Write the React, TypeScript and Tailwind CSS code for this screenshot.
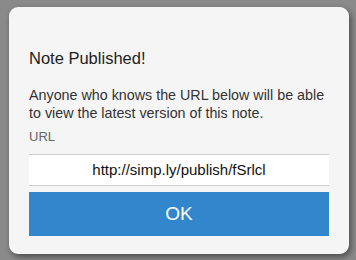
export default function App() {
  return (
    <div className="w-[356px] h-[260px] bg-[#8a8a8a] pt-[7px] pl-[9px]" style={{ fontFamily: '"Liberation Sans", Arial, sans-serif' }}>
      <div className="w-[340px] h-[247px] rounded-[9px] bg-[#f5f5f5] shadow-[2px_3px_6px_rgba(0,0,0,0.45)] pt-[39px] px-5 flex flex-col">
        <div className="text-[16.5px] leading-6 text-[#222]">Note Published!</div>
        <div className="mt-4 text-[14.3px] leading-[18px] text-[#333]">
          Anyone who knows the URL below will be able to view the latest version of this note.
        </div>
        <div className="mt-[7px] text-[13px] leading-4 text-[#666]">URL</div>
        <div className="mt-[9px] h-8 bg-white border-y border-[#cccccc] flex items-center justify-center text-[15px] text-[#111]">
          http://simp.ly/publish/fSrlcl
        </div>
        <button className="mt-[6px] h-11 bg-[#3186cc] text-white text-[19px] flex items-center justify-center">
          OK
        </button>
      </div>
    </div>
  );
}
